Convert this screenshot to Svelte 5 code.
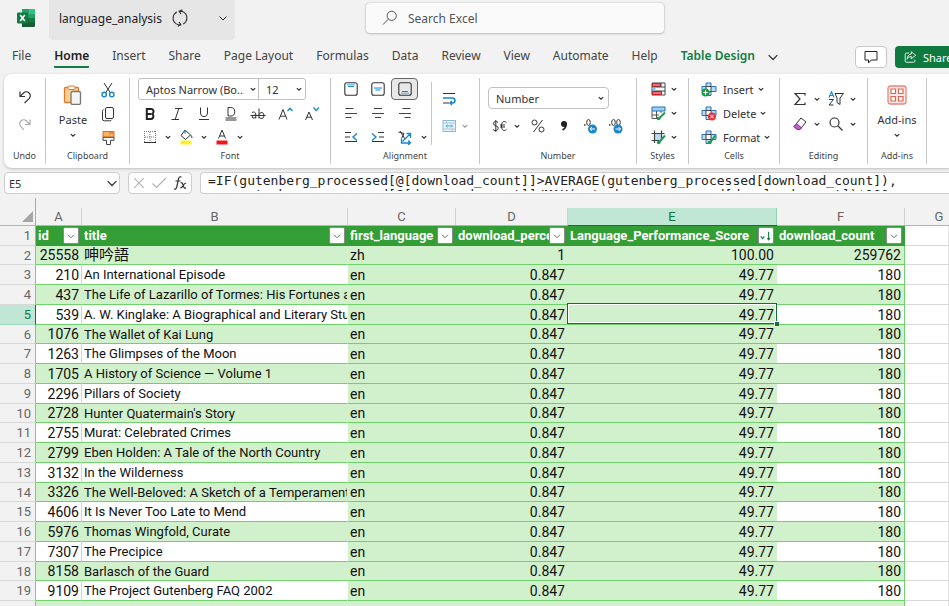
<script>
  const tabs = ['File', 'Home', 'Insert', 'Share', 'Page Layout', 'Formulas', 'Data', 'Review', 'View', 'Automate', 'Help', 'Table Design'];

  const columns = [
    { letter: 'A', key: 'id', cls: 'num' },
    { letter: 'B', key: 'title', cls: 'txt' },
    { letter: 'C', key: 'first_language', cls: 'txt tint' },
    { letter: 'D', key: 'download_percentile', cls: 'num tint' },
    { letter: 'E', key: 'Language_Performance_Score', cls: 'num tint' },
    { letter: 'F', key: 'download_count', cls: 'num last' }
  ];

  const books = [
    [210, 'An International Episode'],
    [437, 'The Life of Lazarillo of Tormes: His Fortunes and Adversities'],
    [539, 'A. W. Kinglake: A Biographical and Literary Study'],
    [1076, 'The Wallet of Kai Lung'],
    [1263, 'The Glimpses of the Moon'],
    [1705, 'A History of Science — Volume 1'],
    [2296, 'Pillars of Society'],
    [2728, "Hunter Quatermain's Story"],
    [2755, 'Murat: Celebrated Crimes'],
    [2799, 'Eben Holden: A Tale of the North Country'],
    [3132, 'In the Wilderness'],
    [3326, 'The Well-Beloved: A Sketch of a Temperament'],
    [4606, 'It Is Never Too Late to Mend'],
    [5976, 'Thomas Wingfold, Curate'],
    [7307, 'The Precipice'],
    [8158, 'Barlasch of the Guard'],
    [9109, 'The Project Gutenberg FAQ 2002']
  ];

  const rows = [
    [25558, '呻吟語', 'zh', '1', '100.00', '259762'],
    ...books.map(([id, title]) => [id, title, 'en', '0.847', '49.77', '180']),
    ['', '', '', '', '', '']
  ];

  let formula = $state(
    '=IF(gutenberg_processed[@[download_count]]>AVERAGE(gutenberg_processed[download_count]),\n' +
    '    gutenberg_processed[@[download_count]]/MAX(gutenberg_processed[download_count])*100,'
  );

  const K = 'stroke="#333"';
  const B = 'stroke="#1a86c8"';
  const cross = '<path d="M5 2h5v3.500h5v5h-5v4h-5v-4h-4v-5h4z" fill="#b9dcf3" stroke="#2673b8"/><path d="M5 5.500h5v5h-5z" fill="#fff" stroke="#444"/>';
  const icons = {
    sync: '<path d="M5.200 2.600A6.200 6.200 0 0 0 4.300 13M10.800 13.400A6.200 6.200 0 0 0 11.700 3" stroke="#333"/><path d="M10 .6l-2.800 1.300 1.600 2.600M6 15.400l2.800-1.300-1.600-2.600M7.200 1.900q2.600-.2 4.500 1.100M8.800 14.100q-2.600.2-4.500-1.100" stroke="#333"/>',
    search: '<circle cx="9.700" cy="5.800" r="4.600" stroke="#555"/><path d="M6.300 9.200L1 14.600" stroke="#555"/>',
    chevron: '<path d="M4.500 6.500L8 10l3.500-3.500" stroke="currentColor"/>',
    small: '<path d="M5.500 7L8 9.300 10.500 7" stroke="#333" stroke-width="1.400"/>',
    comment: '<path d="M2 2.500h12v8.500H8.300L5.500 14v-3H2z" stroke="#222"/>',
    share: '<path d="M7 3.500H4A1.500 1.500 0 0 0 2.500 5v7.500A1.500 1.500 0 0 0 4 14h8a1.500 1.500 0 0 0 1.500-1.500V11" stroke="#fff"/><path d="M9.500 2l5 4-5 4V7.500C7 7.500 5.500 8.500 4.800 10.500 5 7 6.500 5 9.500 4.600z" stroke="#fff"/>',
    undo: '<path d="M3 2.500v5h5M3.200 7.300L6.500 4c1.500-1.500 4-1.600 5.600 0 1.600 1.500 1.600 4 0 5.600L7.500 14" stroke="#333" stroke-width="1.200"/>',
    redo: '<path d="M13 2.500v5H8M12.800 7.300L9.500 4C8 2.500 5.500 2.400 3.900 4c-1.600 1.500-1.600 4 0 5.600L7 12.800" stroke="#aaa" stroke-width="1.200"/>',
    paste: '<rect x="1.500" y="2.500" width="14" height="15" rx="1" fill="#fbd28b" stroke="#e0792f" stroke-width="1.300"/><rect x="5" y="1" width="7" height="3.500" rx="1" fill="#fff" stroke="#e0792f"/><rect x="8" y="6.500" width="9.500" height="13" rx="1.500" fill="#f4f4f4" stroke="#777" stroke-width="1.300"/>',
    cut: '<path d="M4 1l6.500 10M12 1L5.500 11" stroke="#333"/><circle cx="4.200" cy="12.500" r="2.200" stroke="#1a86c8" stroke-width="1.400"/><circle cx="11.800" cy="12.500" r="2.200" stroke="#1a86c8" stroke-width="1.400"/>',
    copy: '<rect x="5.500" y="1.500" width="8" height="11" rx="1.500" stroke="#333"/><path d="M3.500 3.500Q2.500 4 2.500 5.500V13q0 1.800 1.800 1.800h5.500q1.200 0 1.700-1" stroke="#333"/>',
    painter: '<path d="M3 1.500h11v5.800H3z" fill="#f8b15f" stroke="#d96b27"/><path d="M10 1.500v2.800M12 1.500v2.500" stroke="#d96b27"/><path d="M3 7.300h11v3h-3.500v4.200h-4v-4.200H3z" stroke="#444" fill="#fff"/>',
    bold: '<path d="M4.800 3v10h4.200a2.600 2.600 0 0 0 .5-5.100A2.400 2.400 0 0 0 8.600 3zM5 7.900h4" stroke="#222" stroke-width="2"/>',
    italic: '<path d="M6 2.500h7.500M2.500 13.500H10M9.800 2.500L6.200 13.500" stroke="#333"/>',
    underline: '<path d="M4.500 1.500V7a3.500 3.700 0 0 0 7 0V1.500M3 13.500h10" stroke="#333"/>',
    dunder: '<path d="M5 1.500h2.800a3.900 4.200 0 0 1 0 8.500H5zM2.500 12h11M2.500 14h11" stroke="#333"/>',
    strike: '<path d="M2 6.500q3-1.500 3.800 1.500v4.500M5.800 9Q2 8.800 2 11t3.800.5M9 2.500v10M9 8.500q1-2.200 3-2 2 .4 2 3t-2 3q-2 .2-3-1.700M.5 9.500h15" stroke="#333"/>',
    grow: '<path d="M2 13.500L6 3.500l4 10M3.500 10.200h5" stroke="#333"/><path d="M10.500 5L13 2.200 15.500 5" stroke="#1a86c8" stroke-width="1.300"/>',
    shrink: '<path d="M1.500 14L5 6l3.500 8M2.800 11.200h4.400" stroke="#333"/><path d="M9.500 1.500L12.200 4.500 15 1.500" stroke="#1a86c8" stroke-width="1.300"/>',
    border: '<path d="M2 2.500h12M2.500 2v11M13.500 2v11M8 3v10M3 8h10" stroke="#777" stroke-dasharray="1 1"/><path d="M2 13.500h12" stroke="#333"/>',
    fill: '<path d="M7 1l5.500 5-5 4.500L3 6.500z" stroke="#333" fill="#fff"/><path d="M7 1v3.500M12.500 6q1.500 1.500 1.500 3" stroke="#1a86c8" stroke-width="1.300"/><path d="M2.500 11.500h11v4h-11z" fill="#ffef2e"/>',
    color: '<path d="M4.500 9.500L8 1l3.500 8.500M5.700 7h4.600" stroke="#333"/><path d="M2.500 11.500h11v4h-11z" fill="#f0141e"/>',
    top: '<rect x="1.800" y="1.800" width="12.400" height="12.400" rx="2" stroke="#333" stroke-width="1.100"/><path d="M4 3.500h8" stroke="#7cc4ec" stroke-width="2"/><path d="M5 5.500h6" stroke="#1a86c8"/>',
    middle: '<rect x="1.800" y="1.800" width="12.400" height="12.400" rx="2" stroke="#333" stroke-width="1.100"/><path d="M4 7h8" stroke="#7cc4ec" stroke-width="2"/><path d="M5.500 9h5" stroke="#1a86c8"/>',
    bottom: '<rect x="1.800" y="1.800" width="12.400" height="12.400" rx="2" stroke="#333" stroke-width="1.100"/><path d="M5 10.500h6" stroke="#1a86c8"/><path d="M4 12.300h8" stroke="#7cc4ec" stroke-width="1.600"/>',
    left: '<path d="M2.500 3.500h8M2 8.500h12M2.500 12.500h6" stroke="#444"/>',
    center: '<path d="M4 3.500h8M2 8.500h12M5 12.500h6" stroke="#444"/>',
    right: '<path d="M5.500 3.500h8M2 8.500h12M7.500 12.500h6" stroke="#444"/>',
    outdent: `<path d="M2 3.500h6M2 8h5M2 12.500h12" ${K}/><path d="M14 4.500L10 8l4 3.500" ${B} stroke-width="1.400"/>`,
    indent: `<path d="M8 3.500h6M9 8h5M2 12.500h12" ${K}/><path d="M2 4.500L6 8l-4 3.500" ${B} stroke-width="1.400"/>`,
    orient: `<path d="M1.500 3l5.500 1.500-2.500 5M3 2l5 8" ${K}/><path d="M5.500 12.500L13 5M9.500 4.500h4V9M4.500 9.500v4.500H13M11 11.500l2.500 2.300L11 16" ${B} stroke-width="1.300"/>`,
    wrap: `<path d="M2 3.500h12M2 13h6" ${K}/><path d="M2 8h9q3 0 3 2.500T11.500 13H9.500M11 11l-2 2 2 2" ${B} stroke-width="1.500"/>`,
    merge: '<rect x="2" y="2.500" width="12.500" height="11" fill="#e6f2fa" stroke="#8db9d6"/><path d="M2 5h12.500M2 11h12.500M5.500 2.500V5M11 11v2.500" stroke="#a9c4d6"/><path d="M5 8h6.500M6.500 6.500L5 8l1.500 1.500M10 6.500L11.500 8 10 9.500" stroke="#5aa6d8"/>',
    currency: '<path d="M6 4.500Q5 3.500 3.700 3.500 1.500 3.700 1.500 5.500T3.900 7.800 6.300 10.200 3.800 12.500 1.300 11.300M3.800 2v12M14.500 4.500q-1-1-2.300-1-2.500 0-2.700 4.500.2 4.500 2.700 4.500 1.300 0 2.300-1M8 7h5M8 9h5" stroke="#333"/>',
    percent: '<circle cx="4.500" cy="4.500" r="2.500" stroke="#333"/><circle cx="11.500" cy="11.500" r="2.500" stroke="#333"/><path d="M12.500 2L3.500 14" stroke="#333"/>',
    comma: '<circle cx="8" cy="6" r="3" fill="#222"/><path d="M10.200 6q0 4-3.700 6" stroke="#222" stroke-width="1.600"/>',
    decinc: '<path d="M2 7h1.400" stroke="#333" stroke-width="1.300"/><ellipse cx="6.500" cy="4.500" rx="1.800" ry="3" stroke="#333"/><circle cx="10.500" cy="11" r="4.500" fill="#1a86c8"/><path d="M13 11H8.200M10 9l-2 2 2 2" stroke="#fff"/>',
    decdec: '<path d="M1 7h1.400" stroke="#333" stroke-width="1.300"/><ellipse cx="5.500" cy="4.500" rx="1.800" ry="3" stroke="#333"/><ellipse cx="10.500" cy="4.500" rx="1.800" ry="3" stroke="#333"/><circle cx="10" cy="11" r="4.500" fill="#1a86c8"/><path d="M7.500 11h4.800M10.500 9l2 2-2 2" stroke="#fff"/>',
    condfmt: '<path d="M2 2h13v12H2z" fill="#fff" stroke="#444"/><path d="M2.500 2.500h8v3h-8zM2.500 10.500h9v3h-9z" fill="#ee6b71" stroke="#c9252d"/><path d="M2 6h13M2 10h13M11 2v4" stroke="#444"/><path d="M2.500 6.500h3v3h-3z" fill="#7cc4ec"/>',
    tablefmt: '<path d="M2 6v7.500h5M6.500 6v7.500M11 6v2M2 10h7" stroke="#555"/><path d="M2 2h13v4H2z" fill="#9fd0ef" stroke="#2673b8"/><path d="M15 7.500L9.500 13" stroke="#1f9a4c" stroke-width="2"/><circle cx="8.500" cy="13.500" r="1.800" fill="#1f9a4c"/>',
    cellstyle: '<path d="M4.500 4.500h7v7h-7z" fill="#b9dcf3"/><path d="M4.500 1.500v12.500M11.500 1.500v8M1.500 4.500h13M1.500 11.500h8" stroke="#444" stroke-width="1.200"/><path d="M15 6.500L9.500 13" stroke="#1f9a4c" stroke-width="2"/><circle cx="8.700" cy="13.500" r="1.800" fill="#1f9a4c"/>',
    insert: cross + '<circle cx="4.500" cy="11.500" r="4" fill="#1f9a4c"/><path d="M2.300 11.500h4.400M4.500 9.300v4.400" stroke="#fff"/>',
    del: cross + '<circle cx="11" cy="11.500" r="4" fill="#e5343d"/><path d="M9.300 9.800l3.400 3.400M12.700 9.800l-3.400 3.400" stroke="#fff"/>',
    format: cross + '<path d="M14.500 6.500L9.500 13" stroke="#1f9a4c" stroke-width="2"/><circle cx="8.500" cy="13.500" r="1.800" fill="#1f9a4c"/>',
    sum: '<path d="M13 4.500V2.500H3L8 8l-5 5.500h10v-2" stroke="#333" stroke-width="1.200"/>',
    eraser: '<path d="M9 2l5 4-6 7.500H5L2 10.500z" stroke="#333" fill="#fff"/><path d="M4.500 7.500l5 4.300L8 13.500H5L2 10.500z" fill="#c05fc4" stroke="#8e2c94"/>',
    sort: `<path d="M1 6.500L3.500.8 6 6.500M2 4.500h3" ${B} stroke-width="1.200"/><path d="M1 8.500h4.500L1 14h4.500M7 2.500h8.500L12 7v6.500l-3-2V7z" ${K}/>`,
    find: '<circle cx="6.500" cy="6.500" r="4.500" stroke="#333" stroke-width="1.200"/><path d="M10 10l4.500 4.500" stroke="#333" stroke-width="1.200"/>',
    addins: '<rect x="1" y="1" width="18" height="18" rx="2.500" fill="#fdeae7" stroke="#e58577" stroke-width="1.300"/><path d="M4 4h4.500v4.500H4zM11.500 4H16v4.500h-4.500zM4 11.500h4.500V16H4zM11.500 11.500H16V16h-4.500z" fill="#fff" stroke="#dc6353" stroke-width="1.200"/>',
    cancel: '<path d="M2.500 2.500l11 11M13.500 2.500l-11 11" stroke="#b0b0b0" stroke-width="1.200"/>',
    accept: '<path d="M1.500 8.500l4 4L15 3" stroke="#b0b0b0" stroke-width="1.200"/>',
    fx: '<path d="M9.500 2Q7.200 1 6.500 4L4.700 12Q4 14.800 2 14M3.500 6h5M8.500 8q1.500-.8 2.300 1.200l1 2.800q.8 1.800 2.200.7M14.200 8q-1.700 0-2.800 2.300T8.300 13" stroke="#333" stroke-width="1.200"/>',
    sorted: '<path d="M2 8.500L4 11l2-2.500M11 3v9M9.500 10.500L11 12.300l1.500-1.800" stroke="#107c41" stroke-width="1.300"/>'
  };
</script>

{#snippet ic(name, size = 16, box = 16)}
  <svg width={size} height={size} viewBox="0 0 {box} {box}" fill="none" aria-hidden="true">{@html icons[name]}</svg>
{/snippet}

{#snippet tool(name, label, on = false)}
  <button class="tool" class:on aria-label={label}>{@render ic(name)}</button>
{/snippet}

{#snippet arrow(label)}
  <button class="arrow" aria-label={label}>{@render ic('small', 14)}</button>
{/snippet}

<div class="app">
  <header class="title">
    <svg class="logo" width="18" height="18" viewBox="0 0 18 18" aria-hidden="true">
      <path d="M5 0h12q1 0 1 1v16q0 1-1 1H5z" fill="#185c37" /><path d="M5 0h6.500v9H5z" fill="#21a366" /><path d="M11.500 0H17q1 0 1 1v4h-6.500z" fill="#33c481" /><path d="M11.500 5H18v4h-6.500z" fill="#21a366" /><path d="M11.500 9H18v4.500h-6.500z" fill="#107c41" />
      <rect y="3.500" width="11" height="11" rx="1" fill="#107c41" /><path d="M3.200 6l4.600 6M7.800 6l-4.600 6" stroke="#fff" stroke-width="1.600" />
    </svg>
    <div class="doc">
      <span>language_analysis</span>
      {@render ic('sync', 18)}
      <button class="more" aria-label="File options">{@render ic('chevron')}</button>
    </div>
    <label class="search">
      {@render ic('search')}
      <input type="text" placeholder="Search Excel" aria-label="Search Excel" />
    </label>
  </header>

  <nav class="tabs">
    {#each tabs as tab}
      <a href="#{tab}" class:active={tab === 'Home'} class:context={tab === 'Table Design'}>{tab}</a>
    {/each}
    <button class="tabmore" aria-label="More tabs">{@render ic('chevron', 20)}</button>
    <button class="comment" aria-label="Comments">{@render ic('comment')}</button>
    <button class="share">{@render ic('share', 14)}<span>Share</span></button>
  </nav>

  <section class="ribbon">
    <div class="group undo">
      <div class="body stack">{@render tool('undo', 'Undo')}{@render tool('redo', 'Redo')}</div>
      <h2>Undo</h2>
    </div>
    <div class="group clip">
      <div class="body">
        <button class="big">{@render ic('paste', 20, 20)}<span>Paste</span>{@render ic('small', 14)}</button>
        <div class="col">{@render tool('cut', 'Cut')}{@render tool('copy', 'Copy')}{@render tool('painter', 'Format painter')}</div>
      </div>
      <h2>Clipboard</h2>
    </div>
    <div class="group font">
      <div class="body rows">
        <div class="pickers">
          <span class="pick face"><select aria-label="Font"><option>Aptos Narrow (Bo...</option></select>{@render ic('small', 14)}</span>
          <span class="pick size"><select aria-label="Font size"><option>12</option></select>{@render ic('small', 14)}</span>
        </div>
        <div class="line styles-line">
          {@render tool('bold', 'Bold')}{@render tool('italic', 'Italic')}{@render tool('underline', 'Underline')}{@render tool('dunder', 'Double underline')}{@render tool('strike', 'Strikethrough')}{@render tool('grow', 'Increase font size')}{@render tool('shrink', 'Decrease font size')}
        </div>
        <div class="line paint-line">
          <span>{@render tool('border', 'Borders')}{@render arrow('Border options')}</span>
          <span>{@render tool('fill', 'Fill colour')}{@render arrow('Fill options')}</span>
          <span>{@render tool('color', 'Font colour')}{@render arrow('Font colour options')}</span>
        </div>
      </div>
      <h2>Font</h2>
    </div>
    <div class="group align">
      <div class="body">
        <div class="agrid">
          {@render tool('top', 'Top align')}{@render tool('middle', 'Middle align')}{@render tool('bottom', 'Bottom align', true)}<i></i>
          {@render tool('left', 'Align left')}{@render tool('center', 'Centre')}{@render tool('right', 'Align right')}<i></i>
          {@render tool('outdent', 'Decrease indent')}{@render tool('indent', 'Increase indent')}{@render tool('orient', 'Orientation')}{@render arrow('Orientation options')}
        </div>
        <div class="wrapcol">
          {@render tool('wrap', 'Wrap text')}
          <span class="dim">{@render tool('merge', 'Merge')}{@render arrow('Merge options')}</span>
        </div>
      </div>
      <h2>Alignment</h2>
    </div>
    <div class="group number">
      <div class="body rows">
        <span class="pick fmt"><select aria-label="Number format"><option>Number</option></select>{@render ic('small', 14)}</span>
        <div class="line num-line">
          <span>{@render tool('currency', 'Currency')}{@render arrow('Currency options')}</span>
          {@render tool('percent', 'Percent')}{@render tool('comma', 'Comma style')}{@render tool('decinc', 'Increase decimal')}{@render tool('decdec', 'Decrease decimal')}
        </div>
      </div>
      <h2>Number</h2>
    </div>
    <div class="group styles">
      <div class="body col three">
        <span>{@render tool('condfmt', 'Conditional formatting')}{@render arrow('Conditional options')}</span>
        <span>{@render tool('tablefmt', 'Format as table')}{@render arrow('Table options')}</span>
        <span>{@render tool('cellstyle', 'Cell styles')}{@render arrow('Cell style options')}</span>
      </div>
      <h2>Styles</h2>
    </div>
    <div class="group cells">
      <div class="body col three">
        <button class="wide">{@render ic('insert')}<span>Insert</span>{@render ic('small', 14)}</button>
        <button class="wide">{@render ic('del')}<span>Delete</span>{@render ic('small', 14)}</button>
        <button class="wide">{@render ic('format')}<span>Format</span>{@render ic('small', 14)}</button>
      </div>
      <h2>Cells</h2>
    </div>
    <div class="group editing">
      <div class="body egrid">
        <span>{@render tool('sum', 'AutoSum')}{@render arrow('Sum options')}</span>
        <span>{@render tool('sort', 'Sort and filter')}{@render arrow('Sort options')}</span>
        <span>{@render tool('eraser', 'Clear')}{@render arrow('Clear options')}</span>
        <span>{@render tool('find', 'Find')}{@render arrow('Find options')}</span>
      </div>
      <h2>Editing</h2>
    </div>
    <div class="group addins">
      <div class="body"><button class="big">{@render ic('addins', 20, 20)}<span>Add-ins</span>{@render ic('small', 14)}</button></div>
      <h2>Add-ins</h2>
    </div>
  </section>

  <section class="formula">
    <span class="namebox"><select aria-label="Name box"><option>E5</option></select>{@render ic('chevron', 20)}</span>
    <div class="fxbar">
      <button aria-label="Cancel">{@render ic('cancel', 14)}</button>
      <button aria-label="Enter">{@render ic('accept')}</button>
      <button aria-label="Insert function">{@render ic('fx')}</button>
    </div>
    <div class="fbox"><textarea aria-label="Formula" wrap="off" spellcheck="false" bind:value={formula}></textarea></div>
  </section>

  <main class="sheet">
    <table>
      <colgroup>
        <col class="w-row" /><col class="w-a" /><col class="w-b" /><col class="w-c" /><col class="w-d" /><col class="w-e" /><col class="w-f" /><col />
      </colgroup>
      <thead>
        <tr>
          <th class="corner" aria-label="Select all"><svg width="11" height="11" viewBox="0 0 11 11" aria-hidden="true"><path d="M11 0v11H0z" fill="#a6a6a6" /></svg></th>
          {#each columns as c}<th scope="col" class:sel={c.letter === 'E'}><div>{c.letter}</div></th>{/each}
          <th scope="col" class="g"><div>G</div></th>
        </tr>
      </thead>
      <tbody>
        <tr class="fields">
          <th scope="row">1</th>
          {#each columns as c}
            <td><div class="field"><span>{c.key}</span><button aria-label="Filter {c.key}">{@render ic(c.letter === 'E' ? 'sorted' : 'chevron', 14)}</button></div></td>
          {/each}
          <td class="blank"></td>
        </tr>
        {#each rows as row, r}
          <tr class:band={r % 2 === 0}>
            <th scope="row" class:sel={r === 3}>{r < 18 ? r + 2 : ''}</th>
            {#each row as value, i}
              <td class={columns[i].cls} class:cjk={r === 0 && i === 1} class:cursor={r === 3 && i === 4}>{value}</td>
            {/each}
            <td class="blank"></td>
          </tr>
        {/each}
      </tbody>
    </table>
  </main>
</div>

<style>
  :global(body) { margin: 0; overflow: hidden; }
  .app {
    height: 100vh; display: flex; flex-direction: column; overflow: hidden;
    background: #f2f2f2; color: #333; font-family: "Noto Sans", "Open Sans", sans-serif; font-size: 12px;
  }
  svg { display: block; flex: none; }
  button { border: 0; padding: 0; margin: 0; background: none; color: inherit; font: inherit; display: flex; align-items: center; justify-content: center; }
  select, input, textarea { font: inherit; color: inherit; border: 0; margin: 0; background: none; outline: none; }
  select { appearance: none; }

  .title { display: flex; height: 40px; flex: none; }
  .logo { margin: 9px 14px 0 17px; }
  .doc { flex: 0 0 186px; box-sizing: border-box; display: flex; align-items: center; gap: 9px; padding: 0 4px 4px 10px; background: #e6e6e6; border-radius: 0 0 4px 4px; color: #222; }
  .more { margin-left: auto; }
  .search { display: flex; align-items: center; gap: 10px; flex: 0 1 298px; height: 30px; box-sizing: border-box; margin: 3px 12px 0 131px; padding: 0 16px; background: #fafafa; border-radius: 4px; box-shadow: 0 0 2px #b5b5b5, 0 1px 2px #c4c4c4; }
  .search input { flex: 1; min-width: 0; padding: 0; }
  .search input::placeholder { color: #555; opacity: 1; }

  .tabs { display: flex; align-items: center; gap: 23px; height: 34px; flex: none; padding: 0 0 0 12px; white-space: nowrap; }
  .tabs a { color: #444; text-decoration: none; line-height: 20px; border-bottom: 2px solid transparent; border-radius: 1px; }
  .tabs a.active { color: #222; font-weight: 600; border-color: #107c41; }
  .tabs a.context { color: #107c41; font-weight: 600; }
  .tabmore { margin-left: -15px; }
  .comment { margin-left: auto; flex: none; width: 32px; height: 22px; box-sizing: border-box; border: 1px solid #c8c8c8; border-radius: 4px; background: #fff; }
  .share { flex: none; margin: 0 -14px 0 -15px; width: 68px; height: 22px; gap: 6px; border-radius: 4px; background: #0e7a40; color: #fff; font-size: 11px; padding-left: 8px; box-sizing: border-box; justify-content: flex-start; }

  .ribbon { display: flex; flex: none; height: 94px; box-sizing: border-box; margin-left: 4px; padding: 4px 0; background: #fff; border-radius: 8px 0 0 8px; box-shadow: 0 1px 3px #bbb; }
  .group { flex: none; box-sizing: border-box; display: flex; flex-direction: column; border-right: 1px solid #c6c6c6; height: 86px; }
  .group h2 { margin: auto 0 0; font-size: 9px; font-weight: 400; line-height: 16px; text-align: center; color: #444; }
  .body { height: 70px; display: flex; }
  .body span { display: flex; align-items: center; }
  .col { display: flex; flex-direction: column; }
  .tool { width: 16px; height: 16px; flex: none; }
  .arrow { width: 14px; height: 16px; flex: none; }
  .undo { width: 42px; }
  .stack { flex-direction: column; align-items: center; gap: 12px; padding-top: 11px; }
  .clip { width: 84px; }
  .big { flex-direction: column; width: 54px; font-size: 11px; justify-content: flex-start; padding-top: 7px; }
  .big span { line-height: 16px; margin-top: 7px; }
  .clip .col { gap: 8px; padding: 4px 0 0 0; }
  .font { width: 201px; }
  .rows { flex-direction: column; }
  .font .rows { padding-left: 8px; }
  .pickers { display: flex; height: 22px; width: 168px; box-sizing: border-box; border: 1px solid #c0c0c0; border-radius: 3px; }
  .body .pick { display: grid; align-items: stretch; font-size: 11px; }
  .pick select { grid-area: 1 / 1; width: 100%; padding: 0 14px 0 7px; }
  .pick svg { grid-area: 1 / 1; justify-self: end; align-self: center; pointer-events: none; }
  .face { width: 119px; border-right: 1px solid #c0c0c0; }
  .face svg { margin-right: -2px; }
  .size { flex: 1; }
  .size svg { margin-right: -1px; }
  .line { display: flex; align-items: center; }
  .styles-line { gap: 11px; padding-left: 4px; margin-top: 6px; }
  .paint-line { gap: 3px; padding-left: 4px; margin-top: 7px; }
  .paint-line span { gap: 3px; }
  .align { width: 149px; }
  .agrid { display: grid; grid-template-columns: 27px 27px 27px 11px; grid-auto-rows: 24px; justify-items: center; align-items: center; padding-left: 6px; height: 70px; margin-top: -1px; }
  .tool.on { width: 27px; height: 22px; box-sizing: border-box; border: 1px solid #666; border-radius: 4px; background: #e8e8e8; }
  .wrapcol { border-left: 1px solid #c6c6c6; margin: 4px 0 3px 2px; padding: 8px 0 0 9px; height: 63px; box-sizing: border-box; display: flex; flex-direction: column; gap: 12px; }
  .dim { gap: 1px; }
  .dim .arrow { opacity: 0.5; }
  .number { width: 157px; }
  .number .rows { padding: 9px 0 0 8px; height: 61px; }
  .body .fmt { width: 121px; height: 22px; box-sizing: border-box; border: 1px solid #c0c0c0; border-radius: 4px; }
  .num-line { margin-top: 9px; padding-left: 4px; gap: 10px; }
  .num-line span { gap: 2px; margin-right: -4px; }
  .styles { width: 52px; }
  .styles .three { padding-left: 13px; }
  .styles .three span { gap: 1px; }
  .three { gap: 8px; padding-top: 3px; height: 67px; }
  .cells { width: 91px; }
  .cells .three { padding-left: 12px; }
  .wide { height: 16px; font-size: 11px; justify-content: flex-start; gap: 6px; }
  .wide svg:last-child { margin-left: -6px; }
  .editing { width: 88px; }
  .egrid { display: grid; grid-template-columns: 36px 36px; grid-auto-rows: 16px; row-gap: 9px; padding: 13px 0 0 12px; height: 57px; box-sizing: content-box; }
  .egrid span { gap: 2px; }
  .addins { width: 59px; }
  .addins .body { justify-content: center; }

  .formula { display: flex; flex: none; height: 22px; margin-top: 4px; gap: 8px; padding-left: 4px; }
  .namebox, .fxbar, .fbox { box-sizing: border-box; border: 1px solid #cdcdcd; border-radius: 4px; background: #fff; }
  .namebox { display: grid; flex: 0 0 116px; font-size: 11px; }
  .namebox select { grid-area: 1 / 1; padding: 0 4px; width: 100%; }
  .namebox svg { grid-area: 1 / 1; justify-self: end; align-self: center; pointer-events: none; margin-right: -3px; }
  .fxbar { display: flex; align-items: center; gap: 5px; flex: 0 0 64px; padding-left: 3px; }
  .fbox { flex: 1; border-right: 0; border-radius: 4px 0 0 4px; padding: 1px 0 0 7px; }
  textarea { display: block; width: 100%; height: 17px; padding: 0; resize: none; overflow: hidden; box-sizing: border-box; font-family: "DejaVu Sans Mono", monospace; font-size: 13px; line-height: 14px; color: #222; white-space: pre; }

  .sheet { flex: 1; min-height: 0; overflow: hidden; margin-top: 4px; font-family: Roboto, "Noto Sans CJK SC", sans-serif; font-size: 13px; color: #111; }
  table { border-collapse: separate; border-spacing: 0; table-layout: fixed; width: 100%; }
  .w-row { width: 36px; } .w-a { width: 46px; } .w-b { width: 266px; } .w-c { width: 108px; } .w-d { width: 112px; } .w-e { width: 209px; } .w-f { width: 128px; }
  th, td { padding: 0; box-sizing: border-box; white-space: nowrap; overflow: hidden; line-height: 18px; }
  thead th { height: 28px; vertical-align: bottom; font-weight: 400; color: #666; border-bottom: 1px solid #b4b4b4; }
  thead th div { line-height: 17px; border-right: 1px solid #d0d0d0; }
  thead .g div { border: 0; padding-left: 24px; }
  thead th.sel { border-bottom: 1px solid #0f703b; color: #0f703b; }
  thead th.sel div { background: #c0e6d6; border-color: #8fd5b4; }
  .corner { border-right: 1px solid #ababab; }
  .corner svg { margin: 0 2px 3px auto; }
  tbody tr { height: 20px; }
  tbody tr:nth-child(4n + 2) { height: 19px; }
  tbody tr:nth-child(4n + 2) > * { line-height: 17px; }
  tbody th { text-align: right; font-weight: 400; color: #666; padding-right: 4px; border-right: 1px solid #ababab; border-bottom: 1px solid #d8d8d8; }
  tbody th.sel { background: #c0e6d6; color: #0f7a40; border-right: 1px solid #0f703b; border-bottom-color: #9cd8bc; }
  td { background: #fff; border-bottom: 1px solid #70d06c; }
  .band td, td.tint { background: #d1f0cc; font-size: inherit; }
  td.tint { font-size: 14px; }
  td.num { text-align: right; padding-right: 3px; font-size: 14px; }
  .txt { padding-left: 2px; }
  td.cjk { font-size: 15px; }
  td.txt:nth-child(3) { border-right: 1px solid transparent; }
  td.num:nth-child(2) { border-right: 1px solid #d4d4d4; padding-right: 2px; }
  .band td.num { font-size: 14px; }
  .band td.tint { font-size: 14px; }
  .band td.cjk { font-size: 15px; }
  .band td.num:nth-child(2) { border-right-color: #d1f0cc; }
  td.last { border-right: 1px solid #70d06c; padding-right: 3px; }
  td.blank, .band td.blank, .fields td.blank { background: #fff; border-bottom: 1px solid #d8d8d8; border-right: 1px solid #e4e4e4; }
  td.cursor { position: relative; overflow: visible; }
  td.cursor::before { content: ""; position: absolute; inset: -2px 0 0 -1px; border: 1px solid #0f703b; box-shadow: inset 0 0 0 1px #fff; }
  td.cursor::after { content: ""; position: absolute; right: -2px; bottom: -2px; width: 4px; height: 4px; background: #0f703b; border: 1px solid #fff; border-width: 1px 0 0 1px; z-index: 1; }
  .fields td { background: #339e36; border-bottom-color: #339e36; color: #fff; font-weight: 700; }
  .field { display: flex; align-items: center; height: 19px; padding: 0 3px 0 2px; }
  .field span { flex: 1; min-width: 0; overflow: hidden; }
  .field button { flex: none; width: 16px; height: 17px; box-sizing: border-box; background: #fff; border: 1px solid #8a8a8a; border-radius: 2px; color: #555; overflow: hidden; }
</style>
